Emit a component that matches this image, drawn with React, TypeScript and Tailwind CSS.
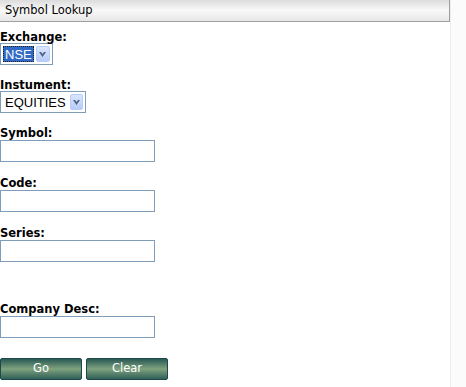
import React from 'react';

const fieldLabel = 'block text-[11.5px] font-bold leading-[12px] text-black';

function TextField({ label, className = '' }: { label: string; className?: string }) {
  return (
    <div className={className}>
      <label className={fieldLabel}>{label}</label>
      <input
        type="text"
        className="mt-[1px] block h-[22px] w-[155px] border border-[#7f9db9] bg-white outline-none"
      />
    </div>
  );
}

function Chevron() {
  return (
    <svg width="7" height="5" viewBox="0 0 7 5" className="block">
      <path d="M0 0h2l1.5 2L5 0h2L3.5 5z" fill="#4d6185" />
    </svg>
  );
}

function FakeSelect({ value, width, active }: { value: string; width: string; active?: boolean }) {
  return (
    <div className={`flex h-[22px] items-center border border-[#7f9db9] bg-white p-[2px] ${width}`}>
      <span
        className={`flex h-full flex-1 items-center px-[2px] font-['Liberation_Sans',Arial,sans-serif] text-[13px] leading-none ${
          active ? 'bg-[#316ac5] text-white outline-1 outline-dotted outline-[#222] -outline-offset-1' : 'text-black'
        }`}
      >
        {value}
      </span>
      <span className="ml-[2px] flex h-full w-[16px] items-center justify-center rounded-[2px] border border-[#b9cdf7] bg-gradient-to-b from-[#dbe6fd] to-[#b6cbf8]">
        <Chevron />
      </span>
    </div>
  );
}

export default function App() {
  return (
    <div className="flex min-h-[387px] w-[466px] bg-white font-['DejaVu_Sans',Verdana,sans-serif]">
      <div className="flex w-[450px] flex-col">
        {/* Header */}
        <div className="flex h-[22px] items-center border-r border-b border-[#a0a0a0] bg-gradient-to-b from-[#dcdcdc] via-[#f9f9f9] to-[#e6e6e6] pl-[5px] text-[11.5px] text-black">
          Symbol Lookup
        </div>

        <div className="flex flex-col pt-[9px]">
          <div>
            <label className={fieldLabel}>Exchange:</label>
            <FakeSelect value="NSE" width="w-[53px]" active />
          </div>

          <div className="mt-[14px]">
            <label className={fieldLabel}>Instument:</label>
            <FakeSelect value="EQUITIES" width="w-[86px]" />
          </div>

          <TextField label="Symbol:" className="mt-[14px]" />
          <TextField label="Code:" className="mt-[15px]" />
          <TextField label="Series:" className="mt-[15px]" />
          <TextField label="Company Desc:" className="mt-[41px]" />

          <div className="mt-[20px] flex gap-[4px]">
            {['Go', 'Clear'].map(b => (
              <button
                key={b}
                className="h-[22px] w-[82px] rounded-[2px] border border-[#1c4a4a] bg-gradient-to-b from-[#2a5a55] via-[#7fa37f] to-[#2f5f58] text-[11.5px] leading-none text-white"
              >
                {b}
              </button>
            ))}
          </div>
        </div>
      </div>
      <div className="w-[16px] border-l border-[#ececec] bg-[#fbfbfb]" />
    </div>
  );
}
